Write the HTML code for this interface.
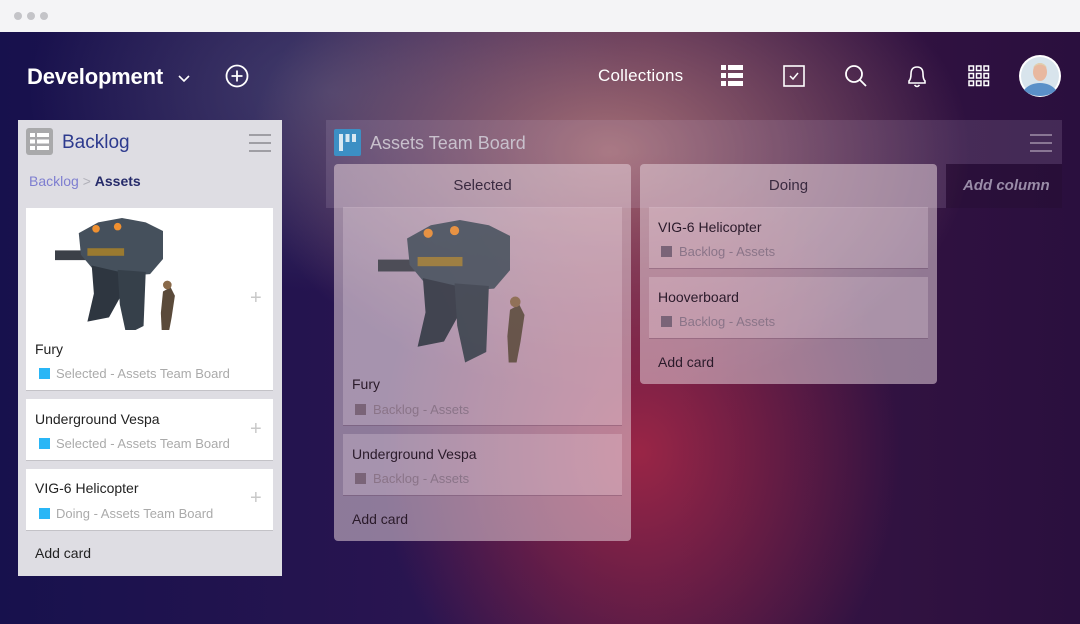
<!DOCTYPE html>
<html><head><meta charset="utf-8"><style>
*{margin:0;padding:0;box-sizing:border-box}
body{width:1080px;height:624px;overflow:hidden;font-family:"Liberation Sans",sans-serif;position:relative;background:#1c1043}
.bg{position:absolute;left:0;top:32px;width:1080px;height:592px;
background:
radial-gradient(ellipse 260px 300px at 640px 420px,rgba(170,40,70,0.85),rgba(170,40,70,0) 100%),
radial-gradient(ellipse 360px 240px at 610px 120px,rgba(170,115,120,0.95),rgba(170,115,120,0) 100%),
radial-gradient(ellipse 300px 200px at 330px 60px,rgba(80,80,120,0.7),rgba(80,80,120,0) 100%),
linear-gradient(90deg,#17114d 0%,#2a1550 40%,#3a1645 60%,#2a0f3e 100%);}
.chrome{position:absolute;left:0;top:0;width:1080px;height:32px;background:#f4f4f6}
.dot{position:absolute;top:12px;width:8px;height:8px;border-radius:50%;background:#c4c4c8}
.abs{position:absolute}
.w{color:#fff}
.panel{position:absolute;left:18px;top:120px;width:264px;height:456px;background:#dedde3}
.card{position:absolute;background:#fff;box-shadow:0 1px 0 rgba(0,0,0,0.12)}
.t{position:absolute;font-size:14px;color:#222}
.tag{position:absolute;font-size:13px;color:#aaa}
.sq{position:absolute;width:11px;height:11px;background:#29b6f6}
.plus{position:absolute;font-size:20px;color:#c8c8c8;font-weight:300}
.col{position:absolute;background:rgba(225,205,215,0.55);border-radius:4px}
.c2{position:absolute;background:rgba(255,235,245,0.22);box-shadow:0 1px 0 rgba(80,40,70,0.25)}
.sq2{position:absolute;width:11px;height:11px;background:#7a6478}
.tag2{position:absolute;font-size:13px;color:#8a7488}
.t2{position:absolute;font-size:14px;color:#2a1a2a}
</style></head><body>
<div class="chrome"><div class="dot" style="left:14px"></div><div class="dot" style="left:27px"></div><div class="dot" style="left:40px"></div></div>
<div class="bg"></div>

<svg width="0" height="0" style="position:absolute"><defs>
<g id="robot">
<rect x="0" y="30" width="34" height="9" fill="#3c4048"/>
<path d="M22 14 L40 4 L62 0 L84 4 L100 12 L100 38 L88 52 L60 54 L34 46 L24 34 Z" fill="#45505c"/>
<rect x="30" y="28" width="34" height="7" fill="#9a7a30"/>
<circle cx="38" cy="10" r="3.5" fill="#f09030"/>
<circle cx="58" cy="8" r="3.5" fill="#f09030"/>
<path d="M34 44 L60 50 L60 74 L50 92 L30 96 L36 70 Z" fill="#2e3640"/>
<path d="M58 48 L84 50 L82 100 L66 108 L60 80 Z" fill="#36404a"/>
<path d="M100 68 L107 64 L111 72 L108 92 L105 108 L99 108 L98 88 Z" fill="#5a4a3a"/>
<circle cx="104" cy="62" r="4" fill="#8a6a4a"/>
</g></defs></svg>

<div class="abs w" style="left:27px;top:64px;font-size:22px;font-weight:bold;letter-spacing:-0.2px">Development</div>
<svg class="abs" style="left:177px;top:73px" width="14" height="10"><path d="M2 3 L7 8 L12 3" stroke="#fff" stroke-width="1.6" fill="none"/></svg>
<svg class="abs" style="left:225px;top:64px" width="24" height="24"><circle cx="12" cy="12" r="10.5" stroke="#fff" stroke-width="1.8" fill="none"/><path d="M12 6.5v11M6.5 12h11" stroke="#fff" stroke-width="1.8"/></svg>
<div class="abs w" style="left:598px;top:66px;font-size:17px;letter-spacing:0.2px">Collections</div>
<svg class="abs" style="left:721px;top:65px" width="22" height="22"><g fill="#fff"><rect x="0" y="0" width="5" height="5"/><rect x="7" y="0" width="15" height="5"/><rect x="0" y="8" width="5" height="5"/><rect x="7" y="8" width="15" height="5"/><rect x="0" y="16" width="5" height="5"/><rect x="7" y="16" width="15" height="5"/></g></svg>
<svg class="abs" style="left:783px;top:65px" width="22" height="22"><rect x="1" y="1" width="20" height="20" stroke="#fff" stroke-width="1.6" fill="none"/><path d="M7 11 L10 14 L15 8" stroke="#fff" stroke-width="1.5" fill="none"/></svg>
<svg class="abs" style="left:844px;top:64px" width="24" height="24"><circle cx="10" cy="10" r="8" stroke="#fff" stroke-width="1.8" fill="none"/><path d="M16 16 L22 22" stroke="#fff" stroke-width="1.8"/></svg>
<svg class="abs" style="left:905px;top:64px" width="24" height="26"><path d="M4 19 L4 17 Q6 15 6 10 Q6 3 12 3 Q18 3 18 10 Q18 15 20 17 L20 19 Z" stroke="#fff" stroke-width="1.6" fill="none"/><path d="M9.5 21 Q12 24 14.5 21" stroke="#fff" stroke-width="1.5" fill="none"/></svg>
<svg class="abs" style="left:968px;top:65px" width="22" height="22"><g stroke="#fff" stroke-width="1.5" fill="none"><rect x="1" y="1" width="4.5" height="4.5"/><rect x="8.5" y="1" width="4.5" height="4.5"/><rect x="16" y="1" width="4.5" height="4.5"/><rect x="1" y="8.5" width="4.5" height="4.5"/><rect x="8.5" y="8.5" width="4.5" height="4.5"/><rect x="16" y="8.5" width="4.5" height="4.5"/><rect x="1" y="16" width="4.5" height="4.5"/><rect x="8.5" y="16" width="4.5" height="4.5"/><rect x="16" y="16" width="4.5" height="4.5"/></g></svg>
<svg class="abs" style="left:1018px;top:54px" width="44" height="44"><circle cx="22" cy="22" r="21" fill="#fff"/><circle cx="22" cy="22" r="19" fill="#d8e4ec"/><path d="M6 36 Q12 29 22 29 Q32 29 38 36 Q32 42 22 42 Q12 42 6 36Z" fill="#5a90c8"/><ellipse cx="22" cy="18" rx="7" ry="9" fill="#e8b8a0"/><path d="M15 14 Q22 7 29 14 Q27 9 22 9 Q17 9 15 14Z" fill="#e0d0b0"/></svg>

<div class="panel"></div>
<svg class="abs" style="left:26px;top:128px" width="27" height="27"><rect width="27" height="27" rx="3" fill="#a9a9ab"/><g fill="#fff"><rect x="4" y="5" width="5" height="4"/><rect x="11" y="5" width="12" height="4"/><rect x="4" y="11.5" width="5" height="4"/><rect x="11" y="11.5" width="12" height="4"/><rect x="4" y="18" width="5" height="4"/><rect x="11" y="18" width="12" height="4"/></g></svg>
<div class="abs" style="left:62px;top:132px;font-size:19px;color:#2d3a8e">Backlog</div>
<svg class="abs" style="left:249px;top:133px" width="22" height="20"><path d="M0 2h22M0 10h22M0 18h22" stroke="#8a8a90" stroke-width="1.6"/></svg>
<div class="abs" style="left:29px;top:173px;font-size:14px;color:#7e7ed0">Backlog <span style="color:#b0b0b8">&gt;</span> <b style="color:#262b6a">Assets</b></div>

<div class="card" style="left:26px;top:208px;width:247px;height:182px"></div>
<svg class="abs" style="left:55px;top:218px" width="125" height="112"><use href="#robot" transform="scale(1.08)"/></svg>
<div class="plus" style="left:250px;top:287px">+</div>
<div class="t" style="left:35px;top:341px">Fury</div>
<div class="sq" style="left:39px;top:368px"></div><div class="tag" style="left:56px;top:366px">Selected - Assets Team Board</div>

<div class="card" style="left:26px;top:399px;width:247px;height:61px"></div>
<div class="t" style="left:35px;top:411px">Underground Vespa</div>
<div class="plus" style="left:250px;top:418px">+</div>
<div class="sq" style="left:39px;top:438px"></div><div class="tag" style="left:56px;top:436px">Selected - Assets Team Board</div>

<div class="card" style="left:26px;top:469px;width:247px;height:61px"></div>
<div class="t" style="left:35px;top:480px">VIG-6 Helicopter</div>
<div class="plus" style="left:250px;top:487px">+</div>
<div class="sq" style="left:39px;top:508px"></div><div class="tag" style="left:56px;top:506px">Doing - Assets Team Board</div>
<div class="t" style="left:35px;top:545px">Add card</div>

<div class="abs" style="left:326px;top:120px;width:736px;height:44px;background:rgba(200,180,210,0.16)"></div>
<div class="abs" style="left:326px;top:164px;width:620px;height:44px;background:rgba(200,180,210,0.16)"></div>
<div class="abs" style="left:946px;top:164px;width:116px;height:44px;background:rgba(30,10,40,0.25)"></div>
<svg class="abs" style="left:334px;top:129px" width="27" height="27"><rect width="27" height="27" rx="2" fill="#3c8fc4"/><g fill="#d8e8f2"><rect x="5" y="5" width="4" height="17"/><rect x="11.5" y="5" width="4" height="8"/><rect x="18" y="5" width="4" height="8"/></g></svg>
<div class="abs" style="left:370px;top:133px;font-size:18px;color:#c8c0cc">Assets Team Board</div>
<svg class="abs" style="left:1030px;top:133px" width="22" height="20"><path d="M0 2h22M0 10h22M0 18h22" stroke="#a090a8" stroke-width="1.6"/></svg>
<div class="abs" style="left:963px;top:177px;font-size:15px;font-style:italic;font-weight:bold;color:#9a8ca8">Add column</div>

<div class="col" style="left:334px;top:164px;width:297px;height:377px"></div>
<div class="abs" style="left:334px;top:177px;width:297px;text-align:center;font-size:15px;color:#3a2a40">Selected</div>
<div class="c2" style="left:343px;top:207px;width:279px;height:218px"></div>
<svg class="abs" style="left:378px;top:220px;opacity:0.85" width="165" height="145"><use href="#robot" transform="scale(1.32)"/></svg>
<div class="t2" style="left:352px;top:376px">Fury</div>
<div class="sq2" style="left:355px;top:404px"></div><div class="tag2" style="left:373px;top:402px">Backlog - Assets</div>
<div class="c2" style="left:343px;top:434px;width:279px;height:61px"></div>
<div class="t2" style="left:352px;top:446px">Underground Vespa</div>
<div class="sq2" style="left:355px;top:473px"></div><div class="tag2" style="left:373px;top:471px">Backlog - Assets</div>
<div class="t2" style="left:352px;top:511px">Add card</div>

<div class="col" style="left:640px;top:164px;width:297px;height:220px"></div>
<div class="abs" style="left:640px;top:177px;width:297px;text-align:center;font-size:15px;color:#3a2a40">Doing</div>
<div class="c2" style="left:649px;top:207px;width:279px;height:61px"></div>
<div class="t2" style="left:658px;top:219px">VIG-6 Helicopter</div>
<div class="sq2" style="left:661px;top:246px"></div><div class="tag2" style="left:679px;top:244px">Backlog - Assets</div>
<div class="c2" style="left:649px;top:277px;width:279px;height:61px"></div>
<div class="t2" style="left:658px;top:289px">Hooverboard</div>
<div class="sq2" style="left:661px;top:316px"></div><div class="tag2" style="left:679px;top:314px">Backlog - Assets</div>
<div class="t2" style="left:658px;top:354px">Add card</div>
</body></html>
